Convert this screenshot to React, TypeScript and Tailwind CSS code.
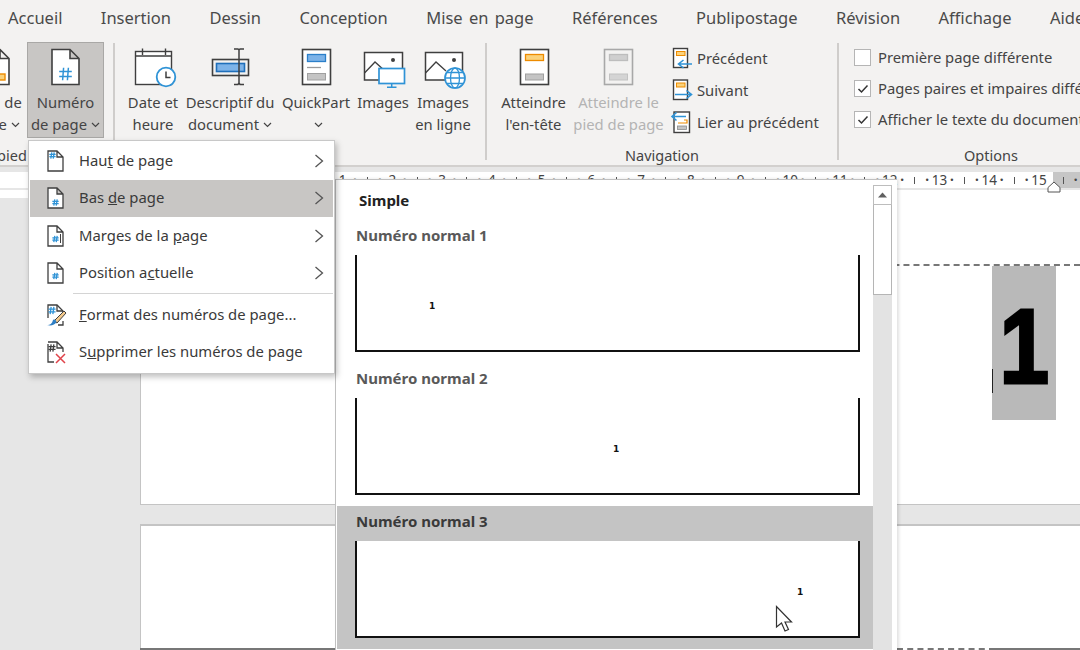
import React from "react";

const D = "#3f3f3f";
const B = "#2f93d6";

function Hash({ x, y, s = 1, c = B }: { x: number; y: number; s?: number; c?: string }) {
  const a = 3.2 * s, b = 4.2 * s;
  return (
    <path
      d={`M${x - a / 2 + 0.5} ${y - b}L${x - a / 2 - 0.5} ${y + b}M${x + a / 2 + 0.5} ${y - b}L${x + a / 2 - 0.5} ${y + b}M${x - b} ${y - a / 2}H${x + b}M${x - b} ${y + a / 2}H${x + b}`}
      stroke={c}
      strokeWidth={s > 1 ? 1.5 : 1.3}
      fill="none"
    />
  );
}

function Big({ children }: { children: React.ReactNode }) {
  return (
    <svg width="40" height="40" viewBox="0 0 40 40" className="overflow-visible">
      {children}
    </svg>
  );
}

const FoldPage = ({ x = 6, w = 27, c = D }: { x?: number; w?: number; c?: string }) => (
  <path
    d={`M${x} 2.5H${x + w - 9}L${x + w} 11.5V37.5H${x}ZM${x + w - 9} 2.5V11.5H${x + w}`}
    fill="#fff"
    stroke={c}
    strokeWidth="1.6"
  />
);

const IconNumero = () => (
  <Big>
    <FoldPage />
    <Hash x={19.5} y={27} s={1.5} />
  </Big>
);
const IconPied = () => (
  <Big>
    <FoldPage />
    <rect x="11" y="27" width="18" height="6" fill="#fbd27b" stroke="#ed8b00" strokeWidth="1.4" />
  </Big>
);
const IconDate = () => (
  <Big>
    <rect x="2.5" y="4.5" width="36" height="33" fill="#fff" stroke={D} strokeWidth="1.4" />
    <path d="M2.5 9H38.5M9.5 1.5V8M32.5 1.5V8" fill="none" stroke={D} strokeWidth="1.4" />
    <circle cx="33" cy="30" r="9.3" fill="#fff" stroke={B} strokeWidth="1.8" />
    <path d="M33 24.5V30.5H37.5" fill="none" stroke={D} strokeWidth="1.5" />
  </Big>
);
const IconDescriptif = () => (
  <Big>
    <rect x="2.5" y="12.5" width="36" height="16" fill="#f3f2f1" stroke={D} strokeWidth="1.6" />
    <rect x="6.5" y="16.5" width="28" height="8" fill="#7db3e8" stroke="#1f6fba" strokeWidth="1.6" />
    <path d="M24 2H28L29 3V36L28 37.5H24M34 2H30L29 3M29 36L30 37.5H34" fill="none" stroke={D} strokeWidth="1.5" />
  </Big>
);
const IconQuick = () => (
  <Big>
    <rect x="6.5" y="2.5" width="28" height="35" fill="#fff" stroke={D} strokeWidth="1.6" />
    <rect x="11.5" y="7.5" width="18" height="7" fill="#7db3e8" stroke="#2b7fc9" strokeWidth="1.3" />
    <path d="M11 20.5H25" stroke="#9a9a9a" strokeWidth="1.3" />
    <rect x="11.5" y="26.5" width="18" height="6.5" fill="#c4c4c4" stroke="#a0a0a0" strokeWidth="1" />
  </Big>
);
const IconImages = () => (
  <Big>
    <rect x="1.5" y="5.5" width="38" height="27.5" fill="#fff" stroke={D} strokeWidth="1.5" />
    <path d="M1.5 26L12 15L22 24" fill="none" stroke={D} strokeWidth="1.3" />
    <circle cx="30" cy="13" r="2" fill={D} />
    <rect x="16" y="21.5" width="25.5" height="15" fill="#fff" stroke={B} strokeWidth="1.7" />
    <path d="M28.7 36.5V40M24 40.3H33.5" stroke={B} strokeWidth="1.5" />
  </Big>
);
const IconImagesLigne = () => (
  <Big>
    <rect x="2.5" y="5.5" width="37" height="27.5" fill="#fff" stroke={D} strokeWidth="1.5" />
    <path d="M2.5 26L13 15L23 24" fill="none" stroke={D} strokeWidth="1.3" />
    <circle cx="31" cy="13" r="2" fill={D} />
    <circle cx="32" cy="31" r="10" fill="#fff" stroke={B} strokeWidth="1.7" />
    <ellipse cx="32" cy="31" rx="4.5" ry="10" fill="none" stroke={B} strokeWidth="1.3" />
    <path d="M22 31H42M24 25.5H40M24 36.5H40" stroke={B} strokeWidth="1.3" />
  </Big>
);
const IconAtt = ({ off }: { off?: boolean }) => (
  <Big>
    <rect x={off ? 5.5 : 6.5} y="2.5" width="28" height="35" fill={off ? "#f3f2f1" : "#fff"} stroke={off ? "#a8a8a8" : D} strokeWidth="1.6" />
    <rect x={off ? 10.5 : 11.5} y="7.5" width="18" height="6" fill={off ? "#cfcfcf" : "#fbd27b"} stroke={off ? "#bdbdbd" : "#ed8b00"} strokeWidth="1.3" />
    <rect x={off ? 10.5 : 11.5} y="27" width="18" height="6" fill={off ? "#d4d4d4" : "#c4c4c4"} stroke={off ? "#c2c2c2" : "#a0a0a0"} strokeWidth="1" />
  </Big>
);

const Small = ({ children }: { children: React.ReactNode }) => (
  <svg width="22" height="22" viewBox="0 0 22 22" className="overflow-visible shrink-0">
    {children}
  </svg>
);
const IconPrev = () => (
  <Small>
    <rect x="2.5" y="1.5" width="14" height="19" fill="#fff" stroke={D} strokeWidth="1.4" />
    <rect x="5.5" y="4.5" width="8.5" height="4" fill="#fbd27b" stroke="#ed8b00" />
    <path d="M21 17H8M12.5 13L7.5 17L12.5 21" fill="none" stroke={B} strokeWidth="1.6" />
  </Small>
);
const IconNext = () => (
  <Small>
    <rect x="2.5" y="1" width="14" height="19.5" fill="#fff" stroke={D} strokeWidth="1.4" />
    <rect x="5.5" y="4" width="8.5" height="4" fill="#fbd27b" stroke="#ed8b00" />
    <path d="M4 15.5H20M15.5 11.5L20.5 15.5L15.5 19.5" fill="none" stroke={B} strokeWidth="1.6" />
  </Small>
);
const IconLink = () => (
  <Small>
    <rect x="3" y="1" width="15.5" height="20.5" fill="#fff" stroke={D} strokeWidth="1.4" />
    <path d="M13 9H16V12H7" fill="none" stroke="#ed8b00" strokeWidth="1.2" />
    <rect x="6.5" y="15" width="9" height="3.5" fill="#c4c4c4" stroke="#8a8a8a" strokeWidth="0.8" />
    <path d="M15 5.5H1.5M5.5 1.5L1 5.5L5.5 9.5" fill="none" stroke={B} strokeWidth="1.6" />
  </Small>
);

const Mini = ({ children }: { children: React.ReactNode }) => (
  <svg width="20" height="22" viewBox="0 0 20 22" className="overflow-visible shrink-0">
    {children}
  </svg>
);
const MiniPage = () => (
  <path d="M2 1H11L17 7V21H2ZM11 1V7H17" fill="#fff" stroke={D} strokeWidth="1.3" />
);
const MHaut = () => (
  <Mini>
    <MiniPage />
    <Hash x={6.5} y={5.5} s={0.75} />
  </Mini>
);
const MBas = () => (
  <Mini>
    <MiniPage />
    <Hash x={9.5} y={15.5} s={0.75} />
  </Mini>
);
const MMarges = () => (
  <Mini>
    <MiniPage />
    <Hash x={9.5} y={14} s={0.75} />
    <path d="M14.5 9V18" stroke={D} strokeWidth="1" />
  </Mini>
);
const MPos = () => (
  <Mini>
    <MiniPage />
    <Hash x={9.5} y={14} s={0.75} />
  </Mini>
);
const MFormat = () => (
  <Mini>
    <path d="M2 14V1H11L17 7V10M12 21H17V17" fill="none" stroke={D} strokeWidth="1.3" />
    <path d="M11 1V7H17" fill="none" stroke={D} strokeWidth="1.3" />
    <Hash x={6} y={6.5} s={0.85} />
    <path d="M8 17L18 7L20 9L11 19Z" fill="#f3c98b" stroke={D} strokeWidth="1" />
    <path d="M1 21C4 21 6 20 7 16C9 15 10 16 10.5 18C9 21 5 22 1 21Z" fill="#2f7fc4" />
  </Mini>
);
const MSuppr = () => (
  <Mini>
    <path d="M2 3V21H8M2 1H11L17 7V11M11 1V7H17" fill="none" stroke={D} strokeWidth="1.3" />
    <Hash x={6} y={7} s={0.85} c={D} />
    <path d="M10 13L19 22M19 13L10 22" stroke="#e0434a" strokeWidth="1.5" />
  </Mini>
);

const Chev = () => (
  <svg width="9" height="6" viewBox="0 0 9 6" className="inline-block ml-[4px] align-[2px]">
    <path d="M1 1L4.5 4.5L8 1" fill="none" stroke="#444" strokeWidth="1.2" />
  </svg>
);

function RBtn({
  icon,
  l1,
  l2,
  chev,
  w,
  off,
  active,
}: {
  icon: React.ReactNode;
  l1: string;
  l2: string;
  chev?: boolean;
  w: string;
  off?: boolean;
  active?: boolean;
}) {
  return (
    <div
      className={`${w} h-[96px] shrink-0 flex flex-col items-center whitespace-nowrap ${
        active ? "bg-[#c8c6c4] border border-[#a9a8a6] pt-[4px]" : "pt-[5px]"
      } ${off ? "text-[#b4b4b4]" : "text-[#444]"}`}
    >
      <div className="h-[40px] w-[40px] shrink-0">{icon}</div>
      <div className="mt-[4px] h-[22px] leading-[22px] text-center">{l1}</div>
      <div className="h-[22px] leading-[22px] text-center">
        {l2}
        {chev && <Chev />}
      </div>
    </div>
  );
}

const Divider = ({ m }: { m: string }) => <div className={`${m} w-[2px] h-[117px] mt-px bg-[#cfcdcb] shrink-0`} />;

const Check = ({ on }: { on?: boolean }) => (
  <div className="w-[17px] h-[17px] border border-[#b5b5b5] bg-white shrink-0 flex items-center justify-center">
    {on && (
      <svg width="12" height="10" viewBox="0 0 12 10">
        <path d="M1.5 5L4.5 8L10.5 1.5" fill="none" stroke="#333" strokeWidth="1.5" />
      </svg>
    )}
  </div>
);

function MenuItem({
  icon,
  text,
  hot,
  arrow,
}: {
  icon: React.ReactNode;
  text: React.ReactNode;
  hot?: boolean;
  arrow?: boolean;
}) {
  return (
    <div className={`h-[37.5px] flex items-center pl-[16px] pr-[9px] ${hot ? "bg-[#c8c6c4]" : ""}`}>
      {icon}
      <span className="ml-[13px] pb-[2px] flex-1 whitespace-nowrap">{text}</span>
      {arrow && (
        <svg width="10" height="14" viewBox="0 0 10 14">
          <path d="M1.5 1L8.5 7L1.5 13" fill="none" stroke="#555" strokeWidth="1.3" />
        </svg>
      )}
    </div>
  );
}

function Preview({ pad }: { pad: string }) {
  return (
    <div className={`ml-[18px] mr-[13px] h-[97px] border-x-2 border-b-2 border-[#111] bg-white pt-[46px] ${pad}`}>
      <div className="w-[6px] text-center text-[9px] leading-[10px] font-bold text-[#111] font-['DejaVu_Sans',sans-serif]">1</div>
    </div>
  );
}

function GalleryItem({ n, pad, hot }: { n: number; pad: string; hot?: boolean }) {
  return (
    <div className={`h-[143px] shrink-0 ${hot ? "bg-[#c4c4c4]" : ""}`}>
      <div className={`h-[35.5px] pl-[19px] pt-[4px] leading-[22px] font-bold text-[15px] ${hot ? "text-[#3a3a3a]" : "text-[#595959]"}`}>
        Numéro normal {n}
      </div>
      <Preview pad={pad} />
    </div>
  );
}

const TABS = ["Accueil", "Insertion", "Dessin", "Conception", "Mise en page", "Références", "Publipostage", "Révision", "Affichage", "Aide"];

export default function App() {
  const rulerCells = Array.from({ length: 15 }, (_, i) => i + 1);
  return (
    <div className="relative w-[1080px] h-[650px] overflow-hidden bg-[#e6e6e6] font-['Noto_Sans',sans-serif] text-[14.8px] text-[#444]">
      {/* tabs */}
      <div className="h-[38px] pb-[2px] bg-[#f3f2f1] flex items-center pl-[8px] gap-[38.4px] whitespace-nowrap text-[16.5px] text-[#4a4a4a] [word-spacing:2px]">
        {TABS.map((t) => (
          <span key={t}>{t}</span>
        ))}
      </div>

      {/* ribbon */}
      <div className="h-[129px] bg-[#f3f2f1] border-b-2 border-[#d2d0ce] flex pt-[4px] overflow-hidden">
        <div className="ml-[-35px] w-[139px] shrink-0 flex flex-col">
          <div className="flex">
            <RBtn w="w-[62px]" icon={<IconPied />} l1="Pied de" l2="page" chev />
            <RBtn w="w-[77px]" active icon={<IconNumero />} l1="Numéro" l2="de page" chev />
          </div>
          <div className="mt-[7px] pl-[15px] leading-[20px] text-[14.5px]">Et pied</div>
        </div>
        <Divider m="ml-[10px] mr-[7px] -translate-x-px" />
        <RBtn w="w-[60px]" icon={<IconDate />} l1="Date et" l2="heure" />
        <RBtn w="w-[98px] -ml-[2px]" icon={<IconDescriptif />} l1="Descriptif du" l2="document" chev />
        <RBtn w="w-[74px]" icon={<IconQuick />} l1="QuickPart" l2="" chev />
        <RBtn w="w-[60px]" icon={<IconImages />} l1="Images" l2="" />
        <RBtn w="w-[60px]" icon={<IconImagesLigne />} l1="Images" l2="en ligne" />
        <Divider m="ml-[12px]" />
        <div className="w-[350px] shrink-0 flex flex-col">
          <div className="flex h-[103px]">
            <RBtn w="w-[89px] ml-[2px]" icon={<IconAtt />} l1="Atteindre" l2="l'en-tête" />
            <RBtn w="w-[81px]" off icon={<IconAtt off />} l1="Atteindre le" l2="pied de page" />
            <div className="ml-[12px] flex flex-col gap-[10px] pt-[5px]">
              <div className="flex items-center gap-[4px] h-[22px]"><IconPrev /><span>Précédent</span></div>
              <div className="flex items-center gap-[4px] h-[22px]"><IconNext /><span>Suivant</span></div>
              <div className="flex items-center gap-[4px] h-[22px] whitespace-nowrap"><IconLink /><span>Lier au précédent</span></div>
            </div>
          </div>
          <div className="text-center leading-[20px] text-[14.5px]">Navigation</div>
        </div>
        <Divider m="" />
        <div className="w-[304px] shrink-0 flex flex-col">
          <div className="h-[103px] pl-[15px] pt-[7px] flex flex-col gap-[14px] whitespace-nowrap">
            <div className="flex items-center gap-[7px] h-[17px]"><Check /><span>Première page différente</span></div>
            <div className="flex items-center gap-[7px] h-[17px]"><Check on /><span>Pages paires et impaires différentes</span></div>
            <div className="flex items-center gap-[7px] h-[17px]"><Check on /><span>Afficher le texte du document</span></div>
          </div>
          <div className="text-center leading-[20px] text-[14.5px]">Options</div>
        </div>
      </div>

      {/* ruler */}
      <div className="mt-[5px] h-[16px] bg-white flex text-[13.5px] leading-[16px] text-[#444] overflow-hidden">
        <div className="w-[1053px] shrink-0 pl-[299px] flex items-center overflow-hidden">
          {rulerCells.map((n) => (
            <React.Fragment key={n}>
              <span className="w-[12.44px] shrink-0 text-center font-bold">·</span>
              <span className="w-[12.44px] shrink-0 flex justify-center"><span className="w-px h-[7px] bg-[#555]" /></span>
              <span className="w-[12.44px] shrink-0 text-center font-bold">·</span>
              <span className="w-[12.44px] shrink-0 flex justify-center">{n}</span>
            </React.Fragment>
          ))}
        </div>
        <div className="flex-1 bg-[#c6c6c6] pl-[4px] flex items-center">
          <span className="w-[12.4px] flex justify-center"><span className="w-px h-[7px] bg-[#555]" /></span>
          <span className="w-[12.4px] text-center font-bold">·</span>
        </div>
      </div>

      {/* document */}
      <div className="relative flex mt-[2px]">
        <div className="w-[140px] shrink-0"><div className="h-[8px] bg-white" /></div>
        <div className="flex-1 flex flex-col">
          <div className="h-[315px] bg-white border-l border-b border-[#c4c4c4] pt-[74px]">
            <div className="border-t-2 border-dashed border-[#777] h-0" />
            <div className="relative ml-[851px] w-[64px] h-[154px] bg-[#b9b9b9] flex items-center justify-center">
              <span className="absolute left-0 top-[103px] w-px h-[24px] bg-[#222]" />
              <span className="font-['Liberation_Sans',sans-serif] font-bold text-[105px] leading-[105px] text-black [-webkit-text-stroke:3px_black] scale-x-[0.85] pt-[6px]">1</span>
            </div>
          </div>
          <div className="mt-[19px] h-[124px] bg-white border-l border-t-2 border-[#c4c4c4]" />
          <div className="flex h-[2px] bg-white">
            <div className="w-[757px] bg-[#777]" />
            <div className="w-[98px] border-t-2 border-dashed border-[#777]" />
            <div className="flex-1 bg-[#777]" />
          </div>
        </div>
      </div>

      {/* gallery */}
      <div className="absolute left-[335px] top-[179px] w-[562px] h-[471px] bg-white border-l border-t border-[#c0c0c0] flex shadow-[2px_0_3px_rgba(0,0,0,0.12)]">
        <div className="w-[537px] shrink-0 pl-px flex flex-col overflow-hidden">
          <div className="h-[39.5px] shrink-0 pl-[22px] pt-[9px] font-bold text-[15px] leading-[22px] text-[#222]">Simple</div>
          <GalleryItem n={1} pad="pl-[72px]" />
          <GalleryItem n={2} pad="pl-[256px]" />
          <GalleryItem n={3} pad="pl-[440px]" hot />
        </div>
        <div className="w-[19px] shrink-0 mt-[5px] bg-[#e3e3e3] flex flex-col">
          <div className="h-[20px] bg-white border border-[#bdbdbd] flex items-center justify-center">
            <svg width="9" height="6" viewBox="0 0 9 6"><path d="M0 5.5L4.5 0.5L9 5.5Z" fill="#606060" /></svg>
          </div>
          <div className="h-[90px] bg-white border border-t-0 border-[#b5b5b5]" />
        </div>
      </div>

      {/* indent marker */}
      <svg width="14" height="12" viewBox="0 0 14 12" className="absolute left-[1047px] top-[181px]">
        <path d="M7 1L13 6.5V11H1V6.5Z" fill="#fff" stroke="#555" strokeWidth="1" />
      </svg>

      {/* dropdown menu */}
      <div className="absolute left-[28px] top-[140px] w-[307px] h-[234px] bg-white border border-[#c8c8c8] shadow-[2px_3px_6px_rgba(0,0,0,0.25)] p-px text-[14.85px] text-[#3a3a3a]">
        <MenuItem icon={<MHaut />} arrow text={<>Hau<u>t</u> de page</>} />
        <MenuItem icon={<MBas />} arrow hot text={<>Bas <u>d</u>e page</>} />
        <MenuItem icon={<MMarges />} arrow text={<>Marges de la <u>p</u>age</>} />
        <MenuItem icon={<MPos />} arrow text={<>Position a<u>c</u>tuelle</>} />
        <div className="ml-[43px] h-px mt-[1px] mb-[2px] bg-[#d4d4d4]" />
        <MenuItem icon={<MFormat />} text={<><u>F</u>ormat des numéros de page...</>} />
        <MenuItem icon={<MSuppr />} text={<>S<u>u</u>pprimer les numéros de page</>} />
      </div>

      {/* mouse pointer */}
      <svg width="18" height="28" viewBox="0 0 18 28" className="absolute left-[775px] top-[605px]">
        <path d="M1.5 1.5V22L6.5 18L10 26L13.5 24.5L10 17H16.5Z" fill="#fff" stroke="#333" strokeWidth="1.2" />
      </svg>
    </div>
  );
}
